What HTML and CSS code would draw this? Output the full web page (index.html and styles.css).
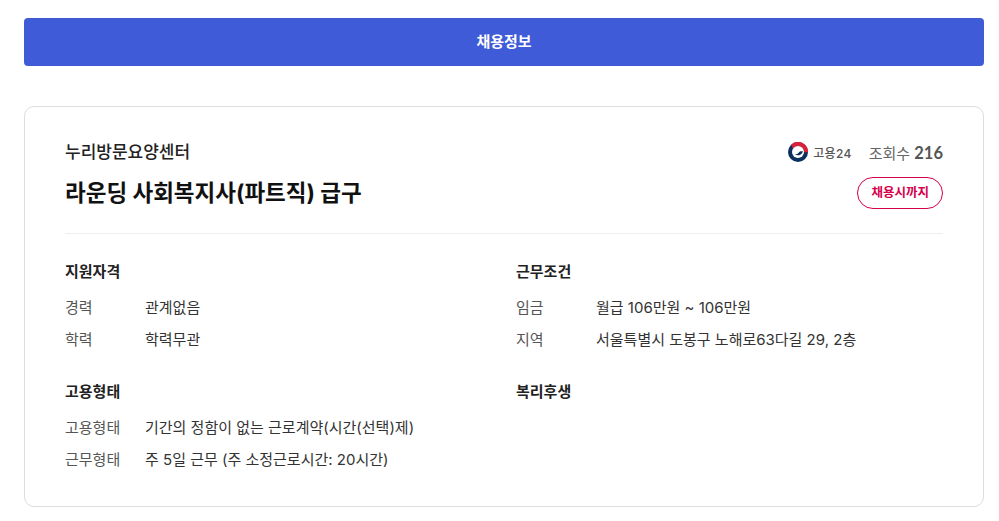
FILE: index.html
```html
<!DOCTYPE html>
<html lang="ko">
<head>
    <meta charset="UTF-8">
    <title>채용정보</title>
    <link rel="stylesheet" href="styles.css">
</head>
<body>
    <div class="tab">채용정보</div>
    <div class="card">
        <div class="head">
            <div class="head-row">
                <span class="company">누리방문요양센터</span>
                <div class="meta">
                    <svg class="logo" width="20" height="20" viewBox="0 0 20 20">
                        <circle cx="10" cy="10" r="10" fill="#0b2f5e"/>
                        <path d="M3 2.8A10 10 0 0 1 20 10.2L15.6 10.2A5.6 5.6 0 0 0 5 7.4C4.6 5.6 4 4 3 2.8Z" fill="#d8213b"/>
                        <circle cx="10" cy="10" r="6" fill="#fff"/>
                        <path d="M6.2 11.6C7.6 12.6 9.8 12.2 10.8 10.6C11.8 9.2 13.6 8.8 15 9.6A5.2 5.2 0 0 1 6.2 11.6Z" fill="#0b2f5e"/>
                    </svg>
                    <span class="logo-text">고용24</span>
                    <span class="views">조회수 <b>216</b></span>
                </div>
            </div>
            <div class="head-row title-row">
                <h1>라운딩 사회복지사(파트직) 급구</h1>
                <span class="badge">채용시까지</span>
            </div>
        </div>
        <div class="info">
            <section>
                <h2>지원자격</h2>
                <dl>
                    <dt>경력</dt><dd>관계없음</dd>
                    <dt>학력</dt><dd>학력무관</dd>
                </dl>
            </section>
            <section>
                <h2>근무조건</h2>
                <dl>
                    <dt>임금</dt><dd>월급 106만원 ~ 106만원</dd>
                    <dt>지역</dt><dd>서울특별시 도봉구 노해로63다길 29, 2층</dd>
                </dl>
            </section>
            <section>
                <h2>고용형태</h2>
                <dl>
                    <dt>고용형태</dt><dd>기간의 정함이 없는 근로계약(시간(선택)제)</dd>
                    <dt>근무형태</dt><dd>주 5일 근무 (주 소정근로시간: 20시간)</dd>
                </dl>
            </section>
            <section>
                <h2>복리후생</h2>
            </section>
        </div>
    </div>
</body>
</html>
```

FILE: styles.css
```css
body {
    margin: 0;
    padding: 18px 15px 0 24px;
    font-family: Inter, "Noto Sans CJK KR", sans-serif;
    color: #222;
    background-color: #fff;
    overflow: hidden;
}
.tab {
    height: 48px;
    line-height: 48px;
    text-align: center;
    font-size: 15px;
    font-weight: 700;
    color: #fff;
    background-color: #3f5bd8;
    border-radius: 4px;
}
.card {
    margin-top: 40px;
    padding: 32px 40px 0;
    height: 401px;
    box-sizing: border-box;
    border: 1px solid #ddd;
    border-radius: 10px;
}
.head {
    padding-bottom: 24px;
    border-bottom: 1px solid #eee;
}
.head-row {
    display: flex;
    justify-content: space-between;
    align-items: center;
}
.title-row {
    margin-top: 12px;
}
.company {
    font-size: 17px;
    font-weight: 500;
    line-height: 26px;
}
.meta {
    display: flex;
    align-items: center;
}
.logo {
    margin-right: 5px;
}
.logo-text {
    font-size: 12px;
    font-weight: 500;
    letter-spacing: 0.3px;
    color: #555;
    margin-right: 17px;
}
.views {
    font-size: 15px;
    color: #666;
}
.views b {
    font-family: Lato, sans-serif;
    font-size: 16.5px;
    font-weight: 700;
    color: #555;
}
h1 {
    margin: 0;
    font-size: 22.5px;
    line-height: 30px;
    font-weight: 700;
    color: #111;
}
.badge {
    padding: 0 13px;
    height: 30px;
    line-height: 30px;
    font-size: 12.5px;
    font-weight: 700;
    color: #d6004c;
    border: 1px solid #d6004c;
    border-radius: 16px;
}
.info {
    display: grid;
    grid-template-columns: 451px 1fr;
    row-gap: 28px;
    padding-top: 26px;
}
h2 {
    margin: 0 0 12px;
    font-size: 15px;
    line-height: 24px;
    font-weight: 700;
}
dl {
    display: grid;
    grid-template-columns: 80px 1fr;
    row-gap: 8px;
    margin: 0;
    font-size: 15px;
    line-height: 24px;
}
dt {
    color: #555;
}
dd {
    margin: 0;
    color: #333;
}
```
